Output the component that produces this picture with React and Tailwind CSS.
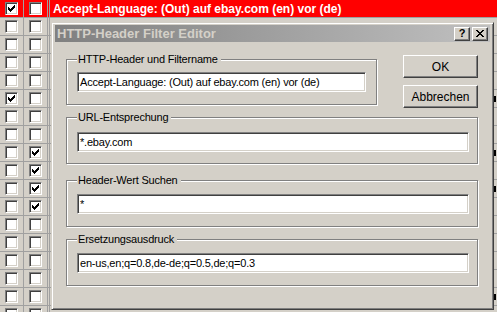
import React from "react";

const ROWS = 18;
const col1Checked = [0, 5];
const col2Checked = [8, 9, 10, 11];
// rows whose (hidden) text peeks out at the right edge
const peek = [5, 8, 10, 16];

function Check() {
  // classic 7x7 pixel tick
  const cols = [2, 3, 4, 3, 2, 1, 0];
  return (
    <svg width="7" height="7" viewBox="0 0 7 7" shapeRendering="crispEdges">
      {cols.map((y, x) => (
        <rect key={x} x={x} y={y} width="1" height="3" fill="#000" />
      ))}
    </svg>
  );
}

function CheckBox({ checked }) {
  return (
    <div className="w-[13px] h-[13px] bg-white border border-t-[#808080] border-l-[#808080] border-r-white border-b-white shadow-[inset_1px_1px_0_#404040,inset_-1px_-1px_0_#d4d0c8] flex items-center justify-center">
      {checked && <Check />}
    </div>
  );
}

function ListRow({ i }) {
  const selected = i === 0;
  return (
    <div
      className={`flex h-[18px] border-b border-[#a0a0a0] ${
        selected ? "bg-[#ff0000]" : "bg-[#d4d0c8]"
      }`}
    >
      <div className="w-[24px] border-r border-[#a0a0a0] flex items-center justify-center">
        <CheckBox checked={col1Checked.includes(i)} />
      </div>
      <div className="w-[24px] border-r border-[#a0a0a0] flex items-center justify-center">
        <CheckBox checked={col2Checked.includes(i)} />
      </div>
      <div className="w-[2px] border-r border-[#a0a0a0]" />
      <div className="flex-1 flex items-center pl-[3px] text-[12px] font-bold text-white whitespace-nowrap overflow-hidden">
        {selected && "Accept-Language: (Out) auf ebay.com (en) vor (de)"}
        {peek.includes(i) && <span className="ml-auto mr-[1px] w-[2px] h-[6px] bg-black" />}
      </div>
    </div>
  );
}

function Raised({ className = "", children }) {
  return (
    <div
      className={`bg-[#d4d0c8] border border-t-white border-l-white border-r-[#404040] border-b-[#404040] shadow-[inset_-1px_-1px_0_#808080] flex items-center justify-center ${className}`}
    >
      {children}
    </div>
  );
}

function TextBox({ value, className = "" }) {
  return (
    <div
      className={`h-[20px] bg-white border border-t-[#808080] border-l-[#808080] border-r-white border-b-white shadow-[inset_1px_1px_0_#404040,inset_-1px_-1px_0_#d4d0c8] flex items-center pl-[2px] text-[11px] tracking-[-0.2px] text-black whitespace-nowrap overflow-hidden ${className}`}
    >
      {value}
    </div>
  );
}

function Group({ label, className = "", children }) {
  return (
    <fieldset
      className={`border border-[#808080] shadow-[inset_1px_1px_0_#fff,1px_1px_0_#fff] ${className}`}
    >
      <legend className="pl-[1px] pr-[3px] bg-[#d4d0c8] leading-[13px] text-[11px] tracking-[-0.2px] text-black">
        {label}
      </legend>
      {children}
    </fieldset>
  );
}

export default function App() {
  return (
    <div className="relative w-[497px] h-[312px] overflow-hidden bg-[#d4d0c8] font-['Liberation_Sans',Arial,sans-serif]">
      {/* list behind the dialog */}
      <div className="flex flex-col">
        {Array.from({ length: ROWS }, (_, i) => (
          <ListRow key={i} i={i} />
        ))}
      </div>

      {/* dialog window */}
      <div className="absolute left-[51px] top-[22px] w-[443px] h-[288px] bg-[#d4d0c8] border border-t-[#d4d0c8] border-l-[#d4d0c8] border-r-[#404040] border-b-[#404040] shadow-[inset_1px_1px_0_#fff,inset_-1px_-1px_0_#808080] px-[3px] pt-[2px] flex flex-col">
        {/* title bar */}
        <div className="h-[17px] bg-gradient-to-r from-[#808080] to-[#c0c0c0] flex items-center pl-[2px] pr-[2px]">
          <span className="text-[13px] font-bold text-[#d4d0c8] whitespace-nowrap">
            HTTP-Header Filter Editor
          </span>
          <div className="ml-auto flex gap-[2px]">
            <Raised className="w-[16px] h-[14px] text-[11px] font-bold text-black leading-none">
              ?
            </Raised>
            <Raised className="w-[16px] h-[14px]">
              <svg width="8" height="7" viewBox="0 0 8 7" shapeRendering="crispEdges">
                <path
                  d="M0 0h2v1H0zM6 0h2v1H6zM1 1h2v1H1zM5 1h2v1H5zM2 2h4v1H2zM3 3h2v1H3zM2 4h4v1H2zM1 5h2v1H1zM5 5h2v1H5zM0 6h2v1H0zM6 6h2v1H6z"
                  fill="#000"
                />
              </svg>
            </Raised>
          </div>
        </div>

        {/* body */}
        <div className="flex flex-col pl-[11px] pr-[12px]">
          <div className="flex items-start">
            <Group label="HTTP-Header und Filtername" className="mt-[11px] w-[311px] px-[10px] pt-[6px] pb-[12px]">
              <TextBox value="Accept-Language: (Out) auf ebay.com (en) vor (de)" />
            </Group>
            <div className="ml-auto mt-[13px] flex flex-col gap-[7px]">
              <Raised className="w-[75px] h-[23px] text-[12px] text-black">OK</Raised>
              <Raised className="w-[75px] h-[23px] text-[12px] text-black">Abbrechen</Raised>
            </div>
          </div>

          <Group label="URL-Entsprechung" className="mt-[3px] pl-[10px] pr-[8px] pt-[8px] pb-[11px]">
            <TextBox value="*.ebay.com" />
          </Group>

          <Group label="Header-Wert Suchen" className="mt-[10px] pl-[10px] pr-[8px] pt-[7px] pb-[12px]">
            <TextBox value="*" />
          </Group>

          <Group label="Ersetzungsausdruck" className="mt-[6px] pl-[10px] pr-[8px] pt-[7px] pb-[12px]">
            <TextBox value="en-us,en;q=0.8,de-de;q=0.5,de;q=0.3" />
          </Group>
        </div>
      </div>
    </div>
  );
}
